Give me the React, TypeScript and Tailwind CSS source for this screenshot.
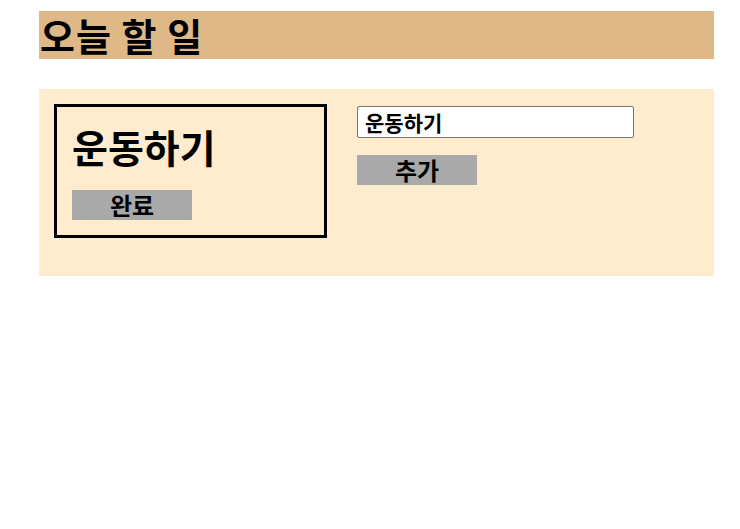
import React, { useState } from "react";

const font = "font-['Noto_Sans_CJK_KR','Noto_Sans',sans-serif]";

const TodoCard = ({ title }: { title: string }) => (
  <div className="w-[273px] h-[134px] border-[3px] border-black px-[15px] pt-[13px]">
    <h2 className="text-[39px] font-bold leading-[52px]">{title}</h2>
    <button className="mt-[18px] w-[120px] h-[30px] bg-[#a9a9a9] text-[24px] font-bold leading-[30px]">
      완료
    </button>
  </div>
);

export default function App() {
  const [text, setText] = useState("운동하기");

  return (
    <div className={`${font} text-black pt-[11px]`}>
      <h1 className="ml-[39px] w-[675px] h-[48px] bg-[#deb887] text-[38px] font-bold leading-[48px] tracking-[1px] pl-[1px]">
        오늘 할 일
      </h1>
      <div className="ml-[39px] mt-[30px] w-[675px] h-[187px] bg-[#ffebcd] flex gap-[30px] p-[15px]">
        <TodoCard title="운동하기" />
        <div className="flex flex-col pt-[2px]">
          <input
            value={text}
            onChange={(e) => setText(e.target.value)}
            className="w-[277px] h-[32px] bg-white border border-[#767676] rounded-[2px] px-[7px] text-[21px] font-bold outline-none"
          />
          <button className="mt-[17px] w-[120px] h-[30px] bg-[#a9a9a9] text-[24px] font-bold leading-[30px]">
            추가
          </button>
        </div>
      </div>
    </div>
  );
}
